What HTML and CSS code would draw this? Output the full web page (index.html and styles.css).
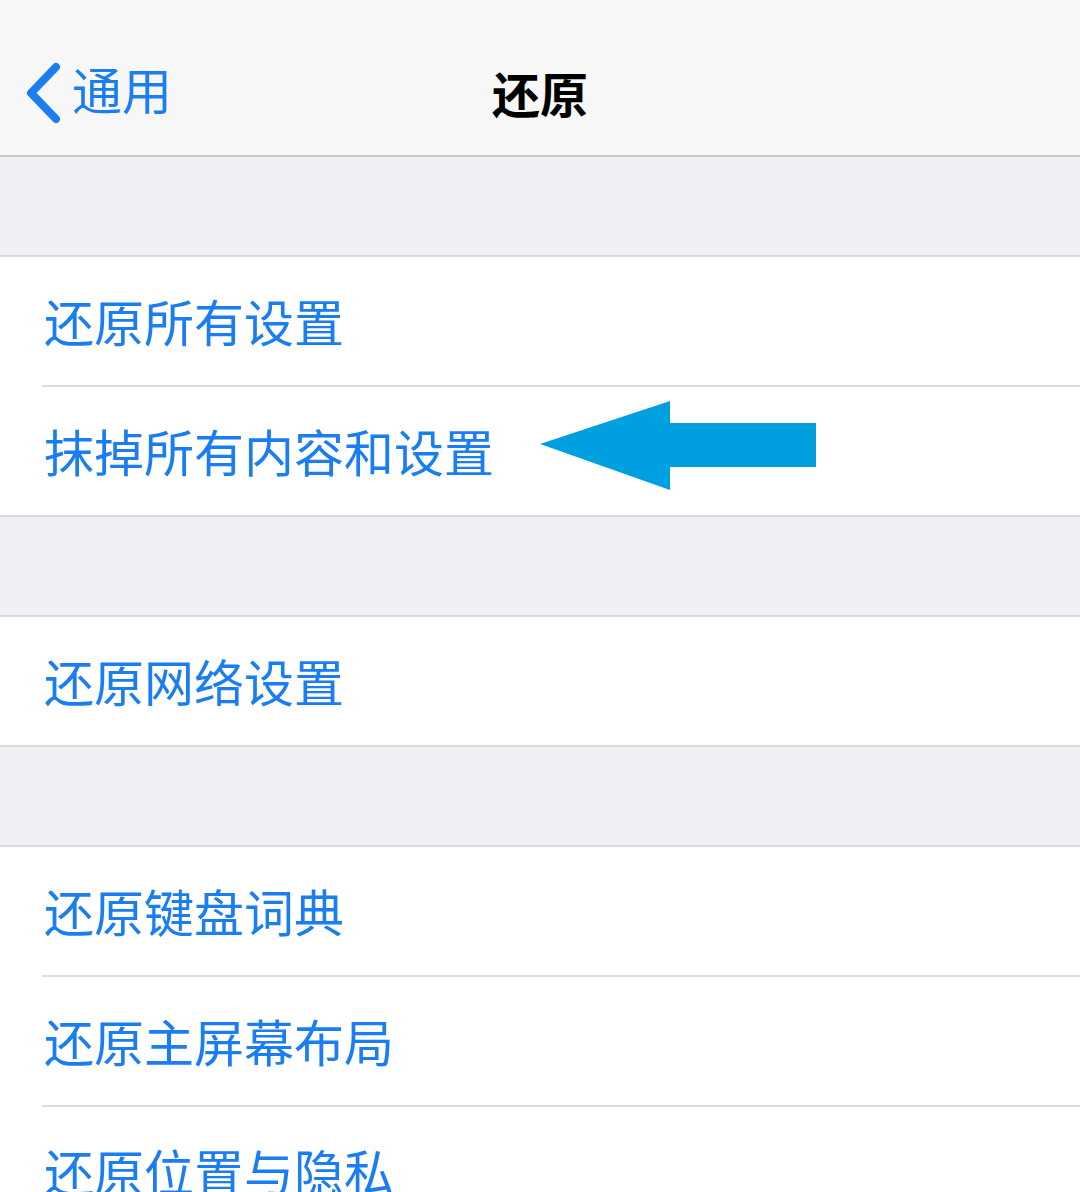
FILE: index.html
```html
<!DOCTYPE html>
<html lang="zh-CN">
<head>
<meta charset="utf-8">
<link rel="stylesheet" href="styles.css">
</head>
<body>
<div class="nav">
  <div class="back">
    <svg class="chev" width="40" height="62" viewBox="0 0 40 62"><polyline points="33,5 8,31 33,57" fill="none" stroke="#1a7ef2" stroke-width="8" stroke-linecap="round" stroke-linejoin="round"/></svg>
    <span class="back-text">通用</span>
  </div>
  <div class="title">还原</div>
</div>
<div class="gap"></div>
<div class="section">
  <div class="row">还原所有设置</div>
  <div class="sep"></div>
  <div class="row arrow-row">抹掉所有内容和设置
    <svg class="arrow" width="276" height="90" viewBox="0 0 276 90"><polygon points="0,43 130,0 130,22 276,22 276,66 130,66 130,89" fill="#009fe0"/></svg>
  </div>
</div>
<div class="gap"></div>
<div class="section">
  <div class="row">还原网络设置</div>
</div>
<div class="gap"></div>
<div class="section">
  <div class="row">还原键盘词典</div>
  <div class="sep"></div>
  <div class="row">还原主屏幕布局</div>
  <div class="sep"></div>
  <div class="row">还原位置与隐私</div>
</div>
</body>
</html>
```
FILE: styles.css
```css
html, body {
  margin: 0;
  padding: 0;
  background: #efeff4;
  font-family: "Noto Sans CJK SC", "Noto Sans", sans-serif;
}
body {
  width: 1080px;
  height: 1192px;
  overflow: hidden;
}
.nav {
  position: relative;
  height: 155px;
  background: #f7f7f7;
  border-bottom: 2px solid #c9c9ce;
  display: flex;
  align-items: flex-start;
  justify-content: center;
}
.back {
  position: absolute;
  left: 23px;
  top: 62px;
  display: flex;
  align-items: center;
}
.back-text {
  margin-left: 9px;
  margin-top: -10px;
  font-size: 50px;
  line-height: 62px;
  color: #1a7ef2;
}
.title {
  font-size: 48px;
  font-weight: 700;
  color: #000;
  line-height: 62px;
  margin-top: 61px;
}
.gap {
  height: 98px;
}
.section {
  background: #fff;
  border-top: 2px solid #d8d8dd;
  border-bottom: 2px solid #d8d8dd;
}
.row {
  height: 128px;
  display: flex;
  align-items: center;
  padding-left: 44px;
  font-size: 50px;
  color: #1a7ef2;
  box-sizing: border-box;
  padding-bottom: 2px;
}
.sep {
  height: 2px;
  margin-left: 42px;
  background: #dcdce0;
}
.arrow-row {
  position: relative;
}
.arrow {
  position: absolute;
  left: 540px;
  top: 14px;
}
```
